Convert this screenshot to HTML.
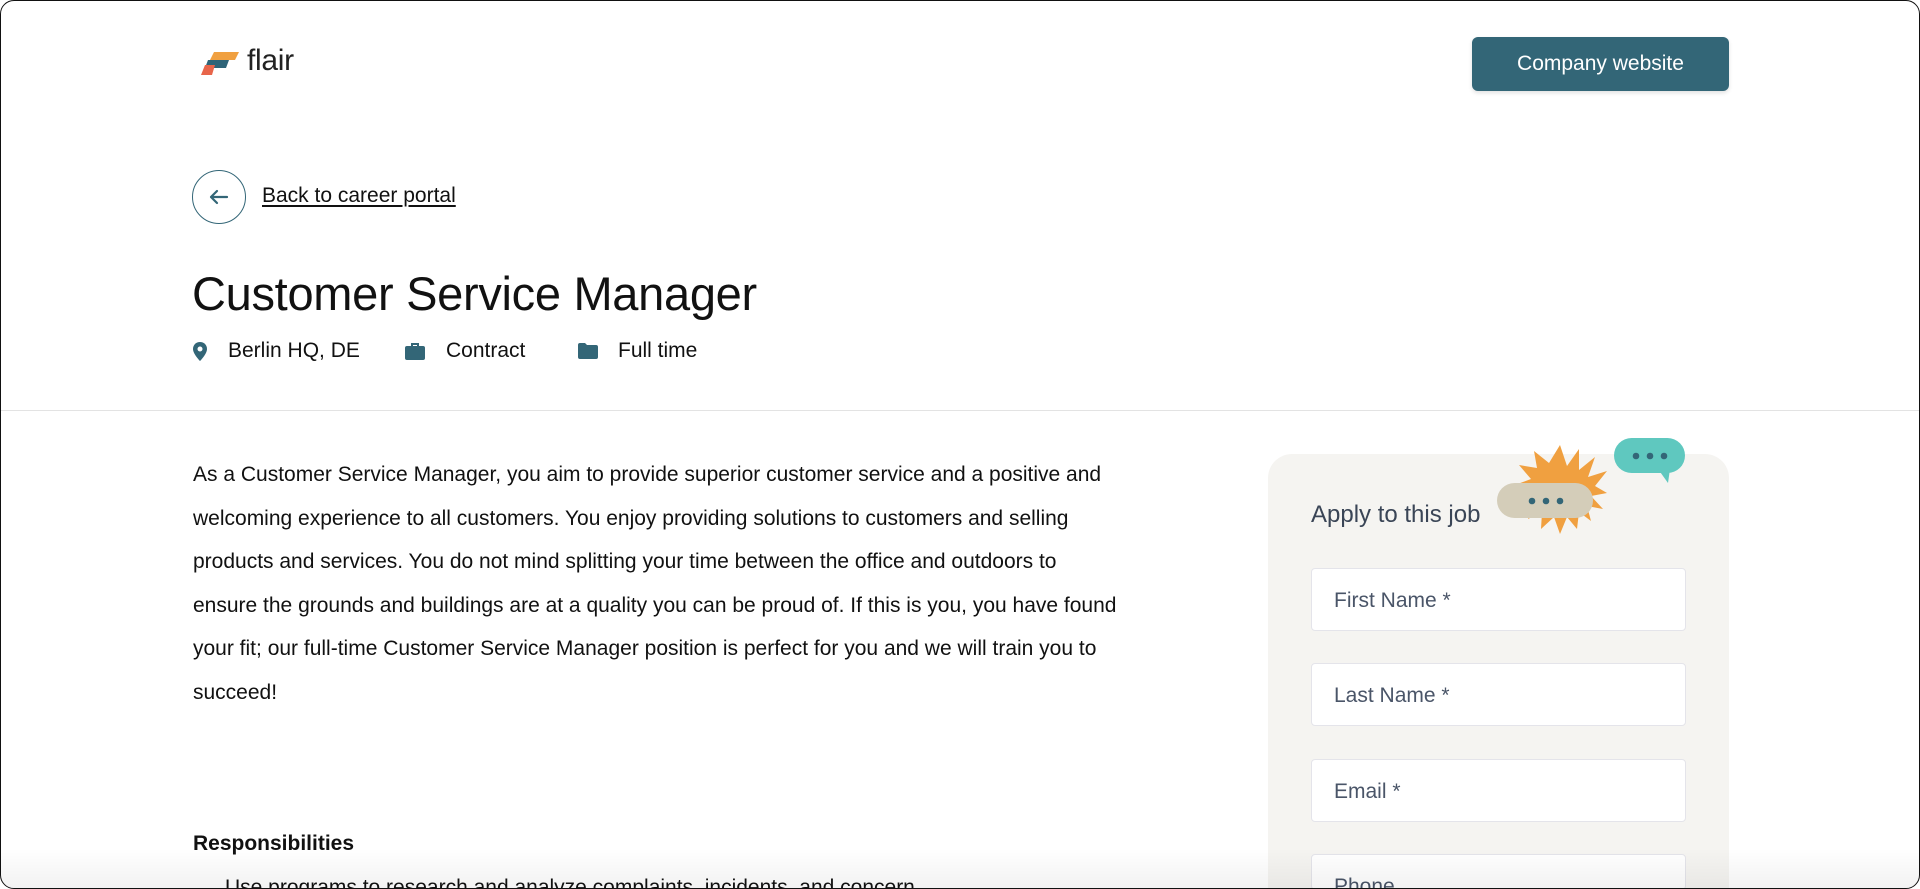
<!DOCTYPE html>
<html><head><meta charset="utf-8"><style>
*{margin:0;padding:0;box-sizing:border-box}
html,body{width:1920px;height:889px;overflow:hidden;background:#fff}
body{font-family:"Liberation Sans",Arial,sans-serif;color:#111;position:relative}
.frame{position:absolute;inset:0;border:1.5px solid #111;border-radius:14px;overflow:hidden;background:#fff}
.abs{position:absolute}
.btn{left:1471px;top:36px;width:257px;height:54px;background:#336677;border-radius:6px;color:#fff;font-size:21px;display:flex;align-items:center;justify-content:center;box-shadow:0 2px 4px rgba(0,0,0,.12)}
.back{left:191px;top:169px;width:54px;height:54px;border:1.5px solid #336677;border-radius:50%}
.link{left:261px;top:183px;font-size:21px;text-decoration:underline;text-underline-offset:3px}
h1{position:absolute;left:191px;top:265px;font-size:47px;font-weight:400;letter-spacing:-.3px}
.meta{position:absolute;top:338px;font-size:21px}
.hr{left:0;right:0;top:409px;height:1px;background:#e3e3e3}
.p{left:192px;top:452px;width:925px;font-size:21px;line-height:43.5px;color:#111}
.card{left:1267px;top:453px;width:461px;height:436px;background:#f5f4f1;border-radius:24px 24px 0 0}
.ap{left:1310px;top:500px;font-size:24px;color:#3a4556}
.in{left:1310px;width:375px;height:63px;background:#fff;border:1px solid #e4e4ea;border-radius:4px;font-size:21px;color:#4a5568;padding:20px 0 0 22px}
</style></head><body><div class="frame">
<svg class="abs" style="left:200px;top:51px" width="44" height="24" viewBox="0 0 44 24">
<polygon points="13,0 38,0 34,8 9,8" fill="#f0a040"/>
<polygon points="7,8 28,8 25,16 4,16" fill="#2e6478"/>
<polygon points="4,13 14,13 11,23 0,23" fill="#e8654a"/>
</svg>
<div class="abs" style="left:246px;top:43px;font-size:30px;color:#222;letter-spacing:-.3px">flair</div>
<div class="abs btn">Company website</div>
<div class="abs back"><svg width="54" height="54" viewBox="0 0 54 54" style="position:absolute;left:-1.5px;top:-1.5px"><path d="M19 27H35M19 27l6-6M19 27l6 6" stroke="#336677" stroke-width="2.2" fill="none" stroke-linecap="round"/></svg></div>
<div class="abs link">Back to career portal</div>
<h1>Customer Service Manager</h1>
<svg class="abs" style="left:192px;top:341px" width="14" height="19" viewBox="0 0 14 19"><path d="M7 0C3 0 0 3 0 7c0 5 7 12 7 12s7-7 7-12c0-4-3-7-7-7z" fill="#336677"/><circle cx="7" cy="7" r="2.5" fill="#fff"/></svg>
<div class="meta" style="left:227px">Berlin HQ, DE</div>
<svg class="abs" style="left:404px;top:342px" width="20" height="17" viewBox="0 0 20 17"><path d="M7 3V1h6v2" stroke="#336677" stroke-width="2" fill="none"/><rect x="0" y="3" width="20" height="14" rx="2" fill="#336677"/></svg>
<div class="meta" style="left:445px">Contract</div>
<svg class="abs" style="left:577px;top:342px" width="20" height="16" viewBox="0 0 20 16"><path d="M0 2a2 2 0 0 1 2-2h5l2 2h9a2 2 0 0 1 2 2v10a2 2 0 0 1-2 2H2a2 2 0 0 1-2-2z" fill="#336677"/></svg>
<div class="meta" style="left:617px">Full time</div>
<div class="abs hr"></div>
<div class="abs p">As a Customer Service Manager, you aim to provide superior customer service and a positive and welcoming experience to all customers. You enjoy providing solutions to customers and selling products and services. You do not mind splitting your time between the office and outdoors to ensure the grounds and buildings are at a quality you can be proud of. If this is you, you have found your fit; our full-time Customer Service Manager position is perfect for you and we will train you to succeed!</div>
<div class="abs" style="left:192px;top:831px;font-size:21px;font-weight:700">Responsibilities</div>
<div class="abs" style="left:224px;top:875px;font-size:21px">Use programs to research and analyze complaints, incidents, and concern</div>
<div class="abs card"></div>
<div class="abs ap">Apply to this job</div>
<svg class="abs" style="left:1490px;top:430px" width="200" height="110" viewBox="1490 430 200 110">
<polygon fill="#f0a040" points="1559,444 1566,465 1578,448 1578,469 1594,456 1587,476 1606,470 1594,485 1606,492 1590,495 1602,508 1586,505 1590,520 1578,511 1576,528 1566,516 1559,533 1553,516 1540,528 1541,511 1527,518 1532,503 1515,503 1527,493 1511,485 1530,478 1518,464 1536,467 1533,450 1548,462"/>
<rect x="1496" y="482" width="96" height="35" rx="17.5" fill="#d4cdb9"/>
<circle cx="1531" cy="500" r="3.3" fill="#336677"/><circle cx="1545" cy="500" r="3.3" fill="#336677"/><circle cx="1559" cy="500" r="3.3" fill="#336677"/>
<rect x="1613" y="437" width="71" height="35" rx="17.5" fill="#5fc8bf"/>
<polygon points="1657,468 1669,468 1667,482" fill="#5fc8bf"/>
<circle cx="1635" cy="455" r="3.3" fill="#336677"/><circle cx="1649" cy="455" r="3.3" fill="#336677"/><circle cx="1663" cy="455" r="3.3" fill="#336677"/>
</svg>
<div class="abs in" style="top:567px">First Name *</div>
<div class="abs in" style="top:662px">Last Name *</div>
<div class="abs in" style="top:758px">Email *</div>
<div class="abs in" style="top:853px;height:36px">Phone</div>
<div class="abs" style="left:0;right:0;bottom:0;height:40px;background:linear-gradient(rgba(255,255,255,0),rgba(0,0,0,.05))"></div>
</div></body></html>
